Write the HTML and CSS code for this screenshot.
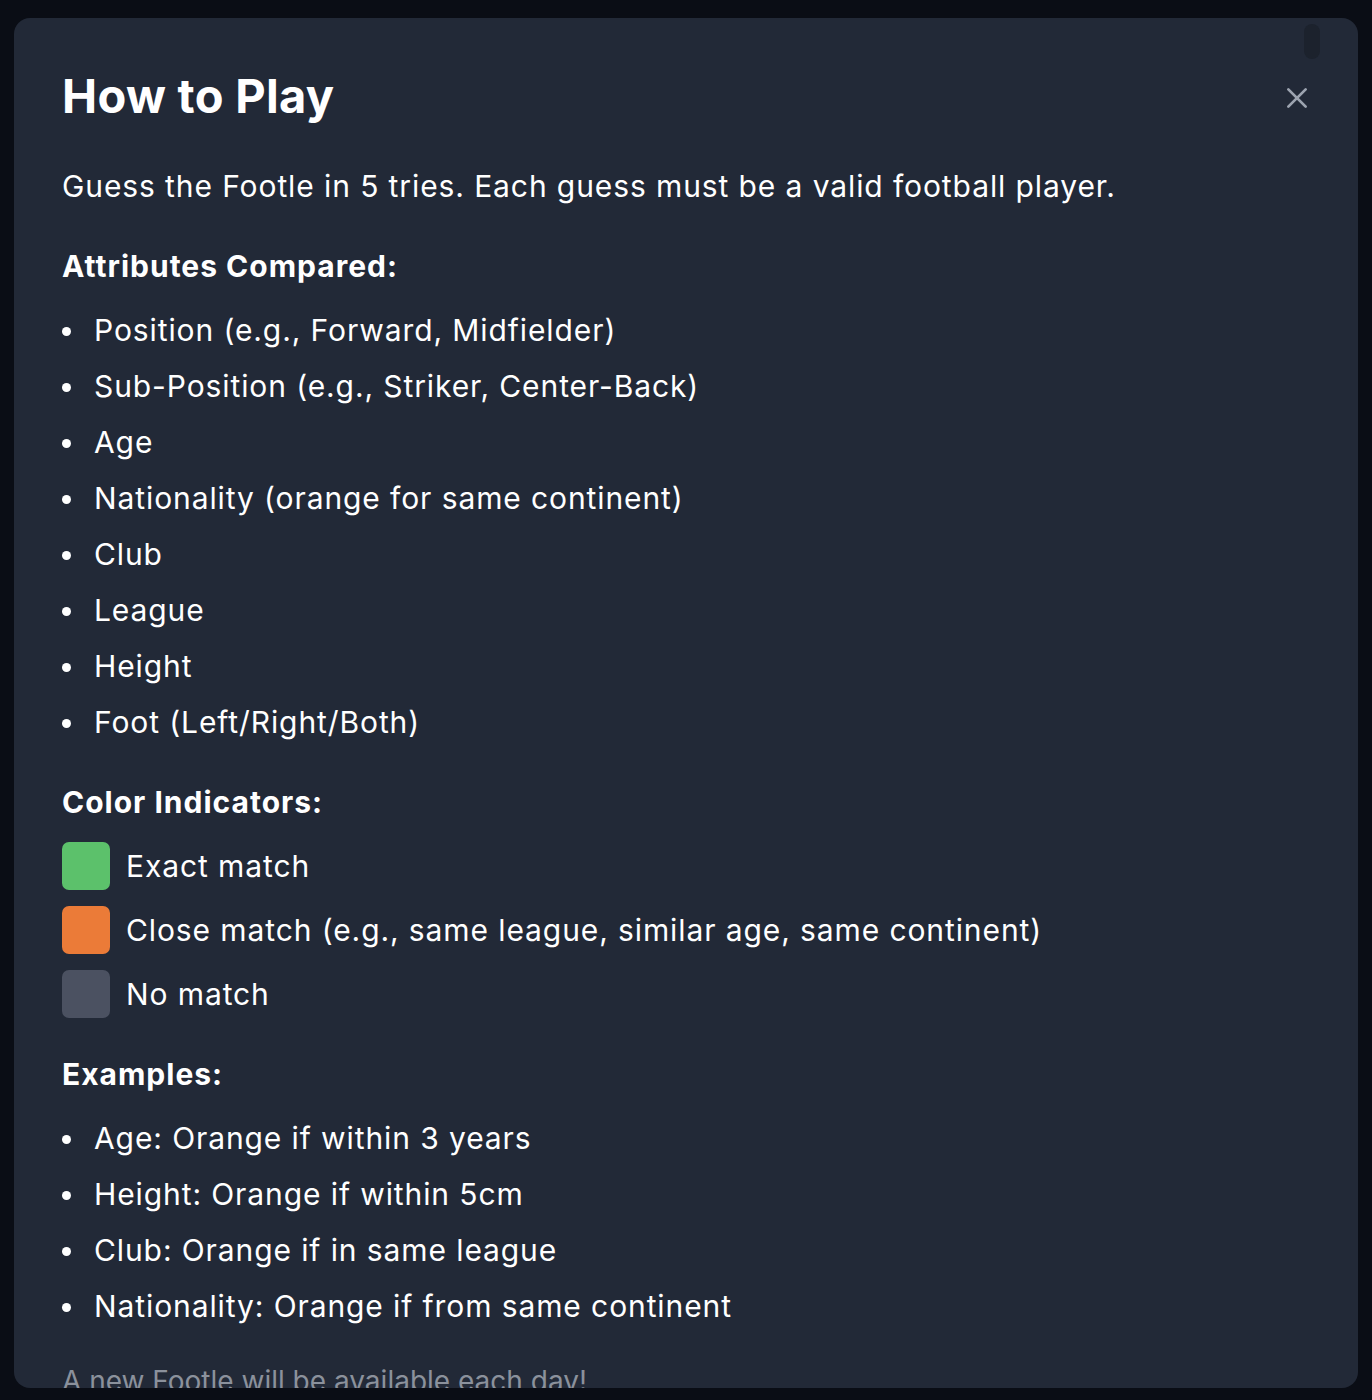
FILE: index.html
```html
<!DOCTYPE html>
<html lang="en">
<head>
<meta charset="utf-8">
<title>How to Play</title>
<link rel="stylesheet" href="styles.css">
</head>
<body>
<div class="modal">
  <span class="thumb"></span>
  <div class="header">
    <h1 class="title">How to Play</h1>
    <button class="close" aria-label="Close">
      <svg viewBox="0 0 24 24" width="26" height="26" fill="none" stroke="currentColor" stroke-width="2.5" stroke-linecap="round"><path d="M4 4L20 20M20 4L4 20"/></svg>
    </button>
  </div>
  <p class="intro">Guess the Footle in 5 tries. Each guess must be a valid football player.</p>

  <h2 class="heading">Attributes Compared:</h2>
  <ul class="list">
    <li>Position (e.g., Forward, Midfielder)</li>
    <li>Sub-Position (e.g., Striker, Center-Back)</li>
    <li>Age</li>
    <li>Nationality (orange for same continent)</li>
    <li>Club</li>
    <li>League</li>
    <li>Height</li>
    <li>Foot (Left/Right/Both)</li>
  </ul>

  <h2 class="heading">Color Indicators:</h2>
  <div class="legend">
    <div class="legend-row"><span class="swatch green"></span><span>Exact match</span></div>
    <div class="legend-row"><span class="swatch orange"></span><span>Close match (e.g., same league, similar age, same continent)</span></div>
    <div class="legend-row"><span class="swatch gray"></span><span>No match</span></div>
  </div>

  <h2 class="heading tight">Examples:</h2>
  <ul class="list">
    <li>Age: Orange if within 3 years</li>
    <li>Height: Orange if within 5cm</li>
    <li>Club: Orange if in same league</li>
    <li>Nationality: Orange if from same continent</li>
  </ul>

  <p class="footer">A new Footle will be available each day!</p>
</div>
</body>
</html>
```
FILE: styles.css
```css
html, body {
  margin: 0;
  padding: 0;
}
body {
  background: #0a0d15;
  font-family: Inter, "Noto Sans", sans-serif;
  color: #ffffff;
  height: 1400px;
  box-sizing: border-box;
  padding: 18px 14px 12px 14px;
  display: flex;
  flex-direction: column;
}
.modal {
  position: relative;
  flex: 1;
  min-height: 0;
  overflow: hidden;
  background: #222937;
  border-radius: 16px;
  padding: 48px;
  display: flex;
  flex-direction: column;
}
.thumb {
  position: absolute;
  top: 6px;
  right: 38px;
  width: 16px;
  height: 35px;
  border-radius: 8px;
  background: #1c222d;
}
.header {
  display: flex;
  justify-content: space-between;
  align-items: center;
  flex-shrink: 0;
}
.title {
  margin: 0;
  font-size: 47px;
  line-height: 60px;
  font-weight: 700;
  letter-spacing: 0.3px;
}
.close {
  background: none;
  border: 0;
  padding: 0;
  margin-top: 4px;
  color: #9ca3af;
  display: flex;
  width: 26px;
  height: 26px;
}
.intro {
  margin: 40px 0 0 0;
  font-size: 30px;
  line-height: 40px;
  letter-spacing: 0.9px;
  flex-shrink: 0;
}
.heading {
  margin: 40px 0 0 0;
  font-size: 30px;
  line-height: 40px;
  font-weight: 700;
  letter-spacing: 1px;
  flex-shrink: 0;
}
.heading.tight {
  margin-top: 36px;
}
.list {
  margin: 24px 0 0 0;
  padding: 0;
  list-style: none;
  display: flex;
  flex-direction: column;
  gap: 16px;
  flex-shrink: 0;
}
.list li {
  display: flex;
  align-items: center;
  font-size: 30px;
  line-height: 40px;
  letter-spacing: 0.9px;
}
.list li::before {
  content: "";
  width: 9px;
  height: 9px;
  border-radius: 50%;
  background: #ffffff;
  margin: 2px 23px 0 1px;
  flex-shrink: 0;
}
.list li {
  margin-left: -1px;
}
.legend {
  margin-top: 20px;
  display: flex;
  flex-direction: column;
  gap: 16px;
  flex-shrink: 0;
}
.legend-row {
  display: flex;
  align-items: center;
  gap: 16px;
  font-size: 30px;
  line-height: 40px;
  letter-spacing: 0.9px;
}
.swatch {
  width: 48px;
  height: 48px;
  border-radius: 7px;
  flex-shrink: 0;
}
.green { background: #5cc16b; }
.orange { background: #eb7b38; }
.gray { background: #4b5161; }
.footer {
  margin: 35px 0 0 0;
  font-size: 28px;
  line-height: 40px;
  color: #8b919c;
  flex-shrink: 0;
}
```
